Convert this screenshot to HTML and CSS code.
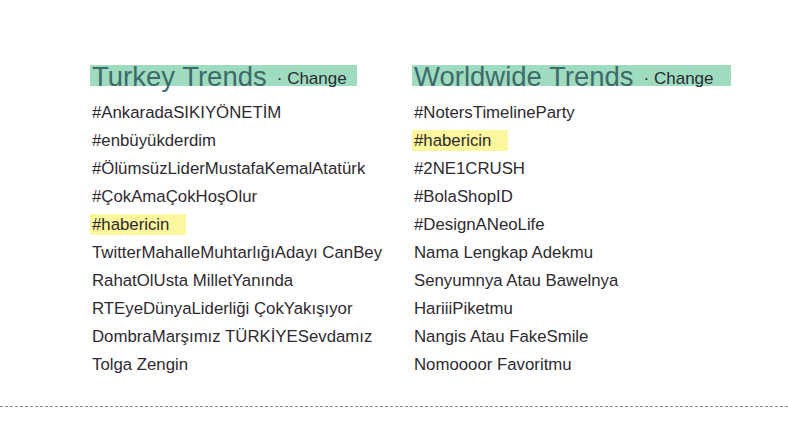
FILE: index.html
```html
<!DOCTYPE html>
<html>
<head>
<meta charset="utf-8">
<link rel="stylesheet" href="styles.css">
</head>
<body>
<div class="page">
  <div class="columns">
    <section class="col col-left">
      <h2 class="head"><span class="title">Turkey Trends</span><span class="change">· Change</span></h2>
      <ul class="list">
        <li>#AnkaradaSIKIYÖNETİM</li>
        <li>#enbüyükderdim</li>
        <li>#ÖlümsüzLiderMustafaKemalAtatürk</li>
        <li>#ÇokAmaÇokHoşOlur</li>
        <li><span class="mark">#habericin</span></li>
        <li>TwitterMahalleMuhtarlığıAdayı CanBey</li>
        <li>RahatOlUsta MilletYanında</li>
        <li>RTEyeDünyaLiderliği ÇokYakışıyor</li>
        <li>DombraMarşımız TÜRKİYESevdamız</li>
        <li>Tolga Zengin</li>
      </ul>
    </section>
    <section class="col col-right">
      <h2 class="head"><span class="title">Worldwide Trends</span><span class="change">· Change</span></h2>
      <ul class="list">
        <li>#NotersTimelineParty</li>
        <li><span class="mark">#habericin</span></li>
        <li>#2NE1CRUSH</li>
        <li>#BolaShopID</li>
        <li>#DesignANeoLife</li>
        <li>Nama Lengkap Adekmu</li>
        <li>Senyumnya Atau Bawelnya</li>
        <li>HariiiPiketmu</li>
        <li>Nangis Atau FakeSmile</li>
        <li>Nomoooor Favoritmu</li>
      </ul>
    </section>
  </div>
  <div class="rule"></div>
</div>
</body>
</html>
```

FILE: styles.css
```css
* { box-sizing: border-box; }
html, body { margin: 0; padding: 0; background: #fff; }
body { font-family: "Liberation Sans", Arial, sans-serif; color: #2e2a30; }
.page { width: 788px; height: 442px; padding-top: 65px; }
.columns { display: flex; padding-left: 90px; height: 341px; }
.col-left { width: 322px; }
.col-right { width: 330px; }
.head {
  margin: 0;
  display: block;
  background: #9fdcbf;
  height: 21px;
  padding: 0 0 0 2px;
  line-height: 21px;
  white-space: nowrap;
  font-weight: normal;
}
.col-left .head { width: 267px; }
.col-right .head { width: 319px; }
.title { font-size: 27.5px; color: #3f6a6c; position: relative; top: 1px; }
.change { font-size: 17px; color: #2a2a34; margin-left: 10px; position: relative; top: -1px; }
.list { list-style: none; margin: 13px 0 0 0; padding: 0 0 0 2px; }
.list li { font-size: 16.8px; height: 28px; line-height: 28px; white-space: nowrap; }
.mark { background: #fcf69c; display: inline-block; line-height: 21px; padding: 0 12px 0 2px; margin-left: -2px; width: 96px; }
.rule { border-top: 1px dashed #8a8a8a; margin-top: 0; }
```
